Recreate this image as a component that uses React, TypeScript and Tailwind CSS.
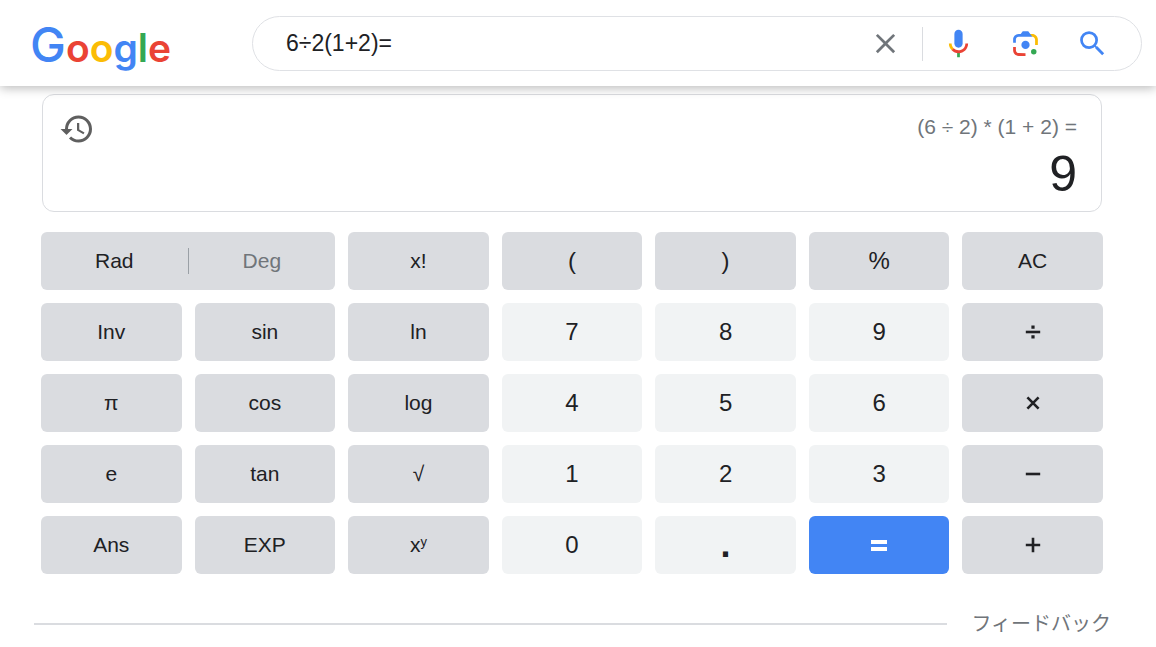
import { useState } from 'react';
import { clsx } from 'clsx';

type Key = {
  label: string;
  kind: 'fn' | 'digit' | 'op' | 'equals';
  sup?: string;
  large?: boolean;
};

const firstRow: Key[] = [
  { label: 'x!', kind: 'fn' },
  { label: '(', kind: 'fn', large: true },
  { label: ')', kind: 'fn', large: true },
  { label: '%', kind: 'fn', large: true },
  { label: 'AC', kind: 'fn' }
];

const keys: Key[] = [
  { label: 'Inv', kind: 'fn' },
  { label: 'sin', kind: 'fn' },
  { label: 'ln', kind: 'fn' },
  { label: '7', kind: 'digit' },
  { label: '8', kind: 'digit' },
  { label: '9', kind: 'digit' },
  { label: '÷', kind: 'op' },
  { label: 'π', kind: 'fn' },
  { label: 'cos', kind: 'fn' },
  { label: 'log', kind: 'fn' },
  { label: '4', kind: 'digit' },
  { label: '5', kind: 'digit' },
  { label: '6', kind: 'digit' },
  { label: '×', kind: 'op' },
  { label: 'e', kind: 'fn' },
  { label: 'tan', kind: 'fn' },
  { label: '√', kind: 'fn' },
  { label: '1', kind: 'digit' },
  { label: '2', kind: 'digit' },
  { label: '3', kind: 'digit' },
  { label: '−', kind: 'op' },
  { label: 'Ans', kind: 'fn' },
  { label: 'EXP', kind: 'fn' },
  { label: 'x', kind: 'fn', sup: 'y' },
  { label: '0', kind: 'digit' },
  { label: '.', kind: 'digit' },
  { label: '=', kind: 'equals' },
  { label: '+', kind: 'op' }
];

function OperatorIcon({ label }: { label: string }) {
  return (
    <svg viewBox="0 0 20 20" className="w-5 h-5" fill="none" stroke="currentColor" strokeWidth="2.6" aria-hidden="true">
      {label === '÷' && (
        <>
          <path d="M2.8 10h14.4" />
          <path d="M8.4 3.6h3.2v3.2H8.4zM8.4 13.2h3.2v3.2H8.4z" fill="currentColor" stroke="none" />
        </>
      )}
      {label === '×' && <path d="M4.4 4.4l11.2 11.2M15.6 4.4L4.4 15.6" />}
      {label === '−' && <path d="M2.8 10h14.4" />}
      {label === '+' && <path d="M2.8 10h14.4M10 2.8v14.4" />}
      {label === '=' && <path d="M2 5h16v4H2zM2 12h16v4H2z" fill="currentColor" stroke="none" />}
    </svg>
  );
}

function CalcKey({ item }: { item: Key }) {
  const isIcon = item.kind === 'op' || item.kind === 'equals';
  return (
    <button
      type="button"
      aria-label={isIcon ? item.label : undefined}
      className={clsx(
        'flex h-[58px] items-center justify-center rounded-md',
        item.kind === 'digit' && 'bg-[#f1f3f4]',
        (item.kind === 'fn' || item.kind === 'op') && 'bg-[#dadce0]',
        item.kind === 'equals' && 'bg-[#4285f4] text-white',
        item.kind === 'digit' || item.large ? 'text-2xl' : 'text-[21px]',
        item.label === '.' && 'text-4xl font-bold'
      )}
    >
      {isIcon ? (
        <OperatorIcon label={item.label} />
      ) : (
        <span>
          {item.label}
          {item.sup && <sup className="text-[13px]">{item.sup}</sup>}
        </span>
      )}
    </button>
  );
}

function Logo() {
  return (
    <a href="#home" className="w-[190px] shrink-0 pt-1.5 font-['Inter',sans-serif] text-[39px] leading-10 font-semibold">
      <span className="text-[48px] font-medium text-[#4285f4]">G</span>
      <span className="text-[#ea4335]">o</span>
      <span className="text-[#fbbc05]">o</span>
      <span className="text-[#4285f4]">g</span>
      <span className="text-[#34a853]">l</span>
      <span className="text-[#ea4335]">e</span>
    </a>
  );
}

function MicIcon() {
  return (
    <svg viewBox="0 0 24 24" className="w-[33px] h-[33px]">
      <path fill="#4285f4" d="M12 15c1.66 0 3-1.31 3-2.97V5.01C15 3.35 13.66 2 12 2S9 3.34 9 5.01v7.02C9 13.69 10.34 15 12 15z" />
      <path fill="#34a853" d="M11 18.08h2V22h-2z" />
      <path fill="#fbbc05" d="M7.05 16.87C5.78 15.54 5 14.04 5 12h2c0 1.45.56 2.42 1.47 3.38v.32l-1.15 1.18z" />
      <path fill="#ea4335" d="M12 16.93a4.97 5.25 0 0 1-3.54-1.55l-1.41 1.49C8.31 18.21 10.07 19 12 19c3.87 0 6.99-2.92 6.99-7H17c0 2.92-2.24 4.93-5 4.93z" />
    </svg>
  );
}

function LensIcon() {
  return (
    <svg viewBox="0 0 192 192" className="w-[33px] h-[33px]">
      <circle fill="#34a853" cx="144" cy="144" r="16" />
      <circle fill="#4285f4" cx="96" cy="104" r="24" />
      <path fill="#ea4335" d="M24 135.2c0 18.11 14.69 32.8 32.8 32.8H96v-16l-40.1-.1c-8.8 0-15.9-8.19-15.9-17.9v-18H24z" />
      <path fill="#fbbc04" d="M168 72.8c0-18.11-14.69-32.8-32.8-32.8H116l20 16c8.8 0 15.9 8.29 15.9 18v30h16z" />
      <path fill="#4285f4" d="M112 24H80L68 40H56.8C38.69 40 24 54.69 24 72.8V92h16V74c0-9.71 7.2-18 16-18h80l-12-16z" />
    </svg>
  );
}

function SearchHeader() {
  return (
    <header className="relative flex items-center bg-white pt-4 pr-[14px] pb-[15px] pl-[30px] shadow-[0_2px_10px_rgba(0,0,0,0.28)]">
      <Logo />
      <form
        role="search"
        onSubmit={(e) => e.preventDefault()}
        className="ml-8 flex h-[55px] min-w-0 flex-1 items-center rounded-full border border-[#dfe1e5] pr-8 pl-[33px]"
      >
        <input
          type="text"
          aria-label="検索"
          defaultValue="6÷2(1+2)="
          className="min-w-0 flex-1 bg-transparent text-[23px] outline-none"
        />
        <button type="reset" aria-label="クリア" className="text-[#70757a]">
          <svg viewBox="0 0 24 24" className="w-[33px] h-[33px]" fill="currentColor">
            <path d="M19 6.41L17.59 5 12 10.59 6.41 5 5 6.41 10.59 12 5 17.59 6.41 19 12 13.41 17.59 19 19 17.59 13.41 12z" />
          </svg>
        </button>
        <span className="mr-[19px] ml-5 h-[34px] w-px bg-[#dadce0]" />
        <div className="flex gap-[34px]">
          <button type="button" aria-label="音声検索">
            <MicIcon />
          </button>
          <button type="button" aria-label="画像で検索">
            <LensIcon />
          </button>
          <button type="submit" aria-label="検索" className="text-[#4285f4]">
            <svg viewBox="0 0 24 24" className="w-[33px] h-[33px]" fill="currentColor">
              <path d="M15.5 14h-.79l-.28-.27A6.471 6.471 0 0 0 16 9.5 6.5 6.5 0 1 0 9.5 16c1.61 0 3.09-.59 4.23-1.57l.27.28v.79l5 4.99L20.49 19l-4.99-5zm-6 0C7.01 14 5 11.99 5 9.5S7.01 5 9.5 5 14 7.01 14 9.5 11.99 14 9.5 14z" />
            </svg>
          </button>
        </div>
      </form>
    </header>
  );
}

export default function App() {
  const [mode, setMode] = useState('Rad');

  return (
    <div className="bg-white font-['Liberation_Sans','Noto_Sans_CJK_JP',sans-serif] text-[#202124]">
      <SearchHeader />

      <main className="pt-2 pr-[53px] pl-[41px]">
        <section className="mx-px flex h-[118px] justify-between rounded-xl border border-[#dadce0] pt-4 pr-6 pl-4">
          <button type="button" aria-label="履歴" className="self-start text-[#5f5f5f]">
            <svg viewBox="0 0 24 24" className="w-9 h-9" fill="currentColor">
              <path d="M13 3a9 9 0 0 0-9 9H1l3.89 3.89.07.14L9 12H6c0-3.87 3.13-7 7-7s7 3.13 7 7-3.13 7-7 7c-1.93 0-3.68-.79-4.94-2.06l-1.42 1.42A8.954 8.954 0 0 0 13 21a9 9 0 0 0 0-18zm-1 5v5l4.28 2.54.72-1.21-3.5-2.08V8z" />
            </svg>
          </button>
          <div className="pt-1 text-right">
            <div className="text-[21px] leading-6 text-[#70757a]">(6 ÷ 2) * (1 + 2) =</div>
            <div className="mt-[11px] text-[50px] leading-12">9</div>
          </div>
        </section>

        <section className="mt-5 grid grid-cols-7 gap-[13px]">
          <div className="col-span-2 flex h-[58px] items-center rounded-md bg-[#dadce0] text-[21px]">
            {['Rad', 'Deg'].map((name) => (
              <button
                key={name}
                type="button"
                aria-pressed={mode === name}
                onClick={() => setMode(name)}
                className={clsx(
                  'h-[26px] flex-1 leading-[26px] first:border-r first:border-[#9aa0a6]',
                  mode !== name && 'text-[#70757a]'
                )}
              >
                {name}
              </button>
            ))}
          </div>
          {firstRow.map((item) => (
            <CalcKey key={item.label} item={item} />
          ))}
          {keys.map((item) => (
            <CalcKey key={item.label} item={item} />
          ))}
        </section>
      </main>

      <footer className="flex items-center pt-[34px] pr-[45px] pl-[34px]">
        <span className="mr-6 h-0.5 flex-1 bg-[#dadce0]" />
        <a href="#feedback" className="text-xl leading-8 text-[#70757a]">
          フィードバック
        </a>
      </footer>
    </div>
  );
}
